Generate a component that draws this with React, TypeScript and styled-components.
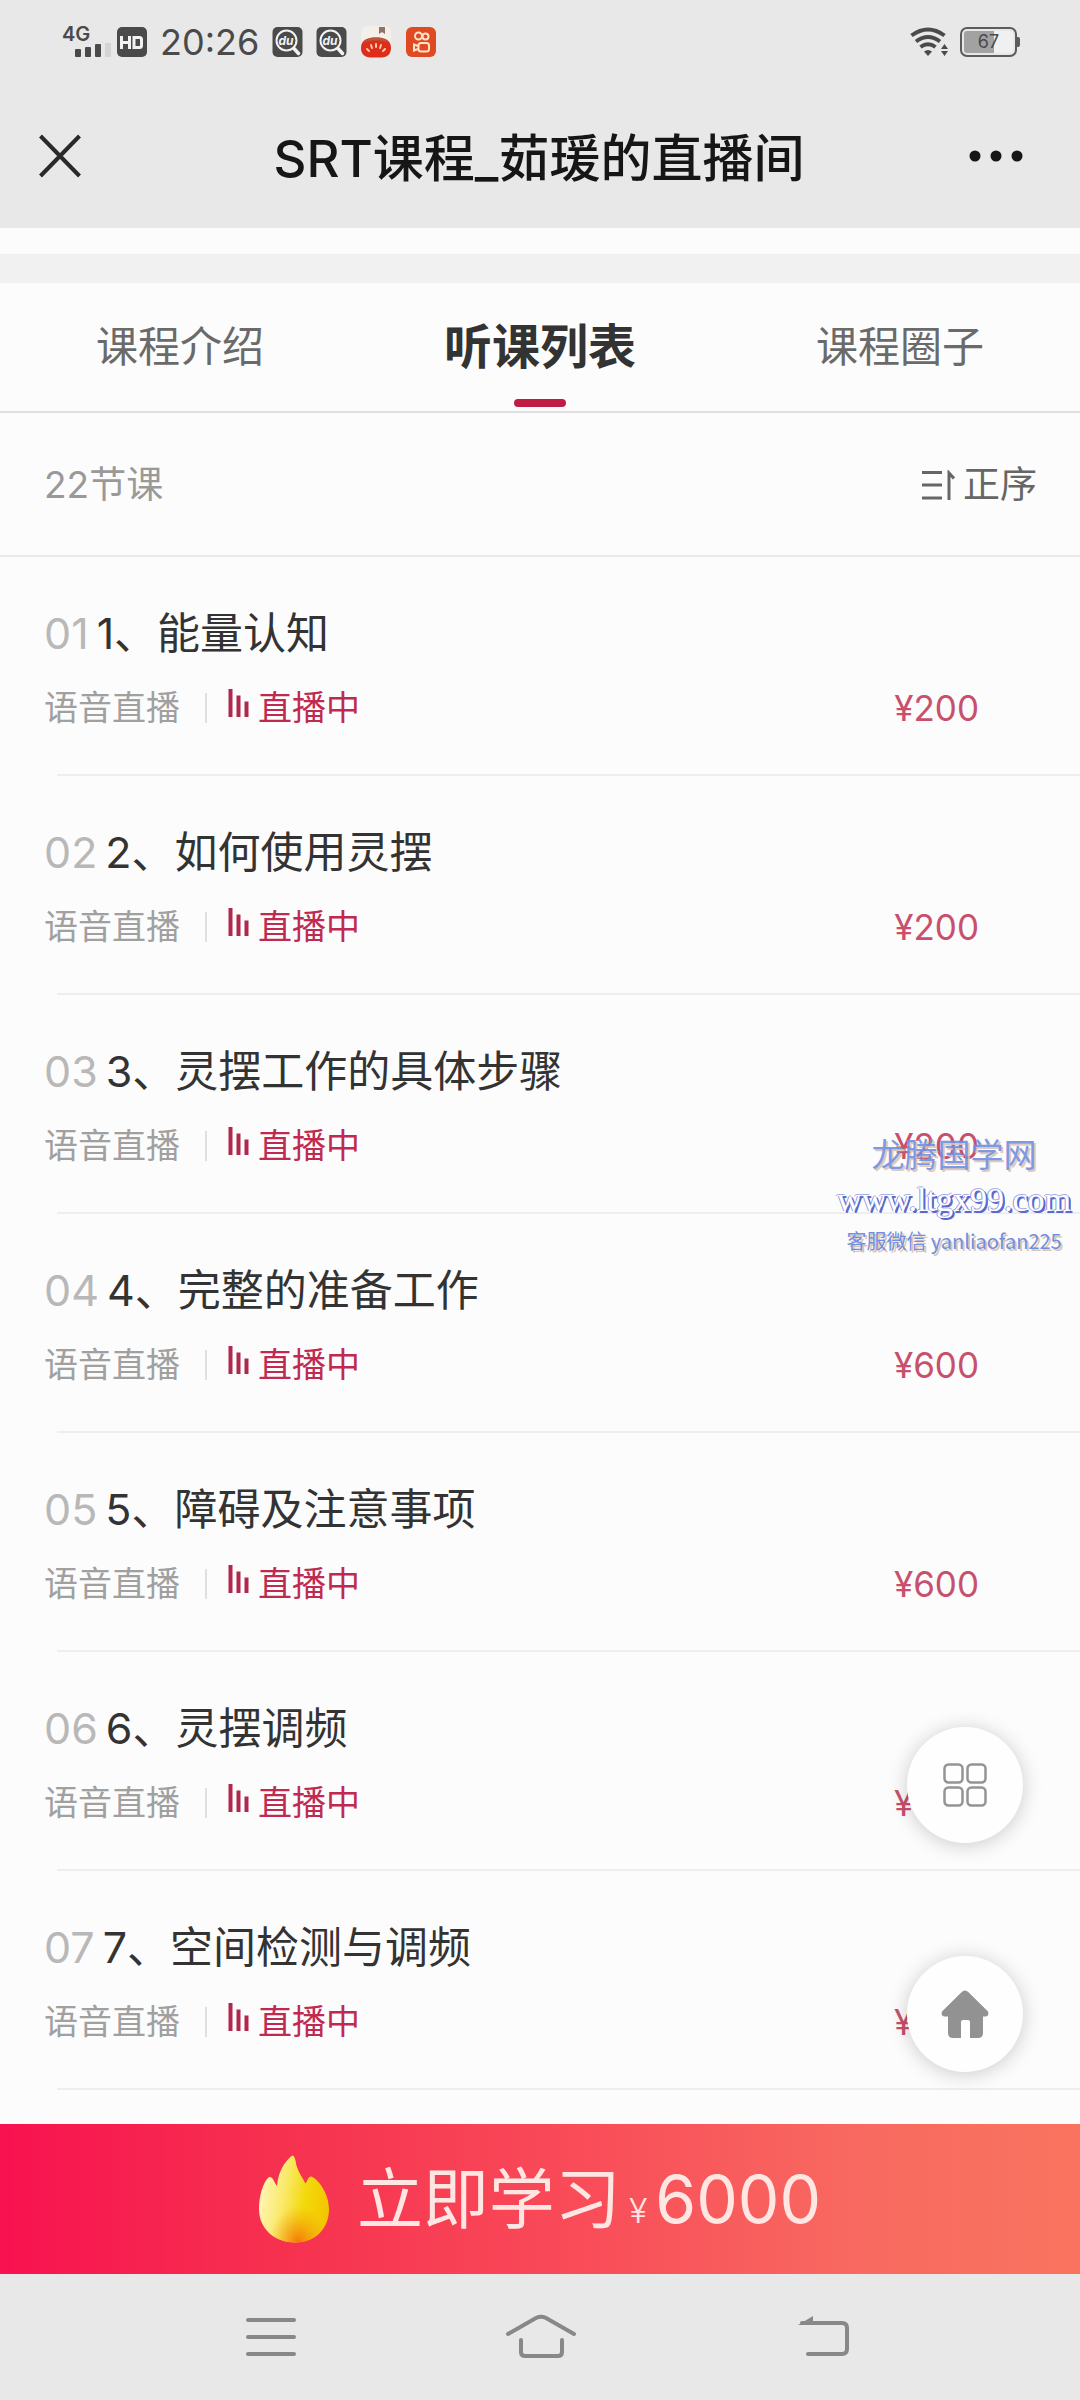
import React from 'react';
import styled, { createGlobalStyle } from 'styled-components';

const GlobalStyle = createGlobalStyle`
  * { box-sizing: border-box; }
  body {
    margin: 0;
    background: #fcfcfc;
    font-family: Inter, "Noto Sans CJK SC", sans-serif;
    color: #333;
  }
  button {
    padding: 0;
    border: 0;
    background: none;
    font: inherit;
    color: inherit;
    cursor: pointer;
  }
  svg { display: block; flex: none; }
`;

const Page = styled.div`
  position: relative;
  display: flex;
  flex-direction: column;
  min-height: 100vh;
`;

const StatusBar = styled.div`
  display: flex;
  align-items: center;
  justify-content: space-between;
  height: 84px;
  padding: 0 63px 0 62px;
  background: #e8e8e8;
  color: #4a4a4a;
`;

const StatusGroup = styled.div<{ $gap: number }>`
  display: flex;
  align-items: center;
  gap: ${(p) => p.$gap}px;
`;

const Signal = styled.div`
  display: flex;
  flex-direction: column;
  width: 50px;
  height: 34px;
  font-size: 20px;
  line-height: 18px;
  font-weight: 600;

  svg { align-self: flex-end; }
`;

const Clock = styled.time`
  font-size: 36px;
  line-height: 40px;
`;

const Battery = styled.div`
  position: relative;
  display: flex;
  align-items: center;
  justify-content: center;
  width: 57px;
  height: 30px;
  border: 2px solid #5c5c5c;
  border-radius: 7px;
  background: linear-gradient(90deg, #a2a2a2 62%, #f0f0f0 62%) content-box;
  padding: 2px;
  font-size: 18px;
  line-height: 22px;

  &::after {
    content: '';
    position: absolute;
    right: -5px;
    top: 8px;
    width: 3px;
    height: 10px;
    border-radius: 0 2px 2px 0;
    background: #5c5c5c;
  }
`;

const TitleBar = styled.header`
  display: grid;
  grid-template-columns: 74px 1fr 60px;
  align-items: center;
  height: 144px;
  padding: 0 54px 0 38px;
  background: #e8e8e8;
`;

const PageTitle = styled.h1`
  margin: 0;
  padding-top: 6px;
  text-align: center;
  font-size: 51px;
  line-height: 60px;
  font-weight: 500;
  color: #161616;
`;

const Band = styled.div`
  height: 55px;
  border-top: 26px solid #fcfcfc;
  background: #f1f1f1;
`;

const Tabs = styled.nav`
  display: grid;
  grid-template-columns: repeat(3, 1fr);
  height: 130px;
  border-bottom: 2px solid #dfdfdf;
`;

const Tab = styled.button<{ $active?: boolean }>`
  position: relative;
  font-size: ${(p) => (p.$active ? 48 : 42)}px;
  line-height: 60px;
  font-weight: ${(p) => (p.$active ? 700 : 400)};
  color: ${(p) => (p.$active ? '#333' : '#6a6a6a')};

  &::after {
    content: '';
    display: ${(p) => (p.$active ? 'block' : 'none')};
    position: absolute;
    left: calc(50% - 26px);
    bottom: 4px;
    width: 52px;
    height: 8px;
    border-radius: 4px;
    background: #bf1e44;
  }
`;

const ListHeader = styled.div`
  display: flex;
  align-items: center;
  justify-content: space-between;
  height: 144px;
  padding: 2px 43px 0 44px;
  border-bottom: 2px solid #e9e9e9;
  font-size: 37px;
  line-height: 60px;
  color: #999;
`;

const SortButton = styled.button`
  display: flex;
  align-items: center;
  gap: 8px;
  color: #666;
`;

const LessonList = styled.ul`
  flex: 1;
  margin: 0;
  padding: 0 0 33px;
  list-style: none;
`;

const Lesson = styled.li`
  display: flex;
  flex-direction: column;
  gap: 23px;
  padding-top: 46px;
`;

const LessonTitle = styled.h2`
  display: flex;
  gap: 8px;
  margin: 0;
  padding: 0 44px;
  font-size: 43px;
  line-height: 60px;
  font-weight: 400;
`;

const LessonNumber = styled.span`
  color: #b8b8b8;
`;

const LessonMeta = styled.div`
  display: flex;
  align-items: center;
  padding: 0 101px 0 44px;
  font-size: 34px;
  line-height: 44px;
  color: #a0a0a0;
`;

const Separator = styled.span`
  width: 2px;
  height: 30px;
  margin: 0 21px 0 25px;
  background: #e0e0e0;
`;

const Live = styled.span`
  display: flex;
  align-items: center;
  gap: 8px;
  color: #c02a50;
`;

const Price = styled.span`
  margin-left: auto;
  font-size: 35px;
  color: #c8506c;
`;

const Divider = styled.div`
  height: 2px;
  margin: 21px 0 0 57px;
  background: #eee;
`;

const BottomDock = styled.footer`
  position: sticky;
  bottom: 0;
`;

const BuyButton = styled.button`
  display: flex;
  align-items: center;
  justify-content: center;
  width: 100%;
  height: 150px;
  background: linear-gradient(90deg, #f8124f 0%, #f6304f 25%, #f94a58 52%, #f86860 78%, #f9745f 100%);
  color: #ffe6e2;
`;

const BuyText = styled.span`
  display: flex;
  align-items: baseline;
  gap: 8px;
  padding: 12px 0 0 28px;
  font-size: 66px;
  line-height: 90px;
`;

const Currency = styled.small`
  font-size: 34px;
  font-weight: 300;
`;

const SystemNav = styled.nav`
  display: grid;
  grid-template-columns: repeat(3, 1fr);
  align-items: center;
  justify-items: center;
  height: 126px;
  padding: 0 12.5%;
  background: #e8e8e8;
`;

const FloatingActions = styled.div`
  position: fixed;
  right: 57px;
  bottom: 328px;
  display: flex;
  flex-direction: column;
  gap: 113px;
`;

const RoundButton = styled.button`
  display: grid;
  place-items: center;
  width: 116px;
  height: 116px;
  border-radius: 50%;
  background: #fefefe;
  box-shadow: 0 2px 20px rgba(0, 0, 0, 0.2);
`;

const Watermark = styled.aside`
  position: absolute;
  top: 1132px;
  right: 9px;
  display: flex;
  flex-direction: column;
  align-items: center;
  color: #6f8fe2;
  text-shadow: 2px 2px 0 #dcc4b6;
  pointer-events: none;
`;

const WatermarkName = styled.span`
  font-size: 33px;
  line-height: 46px;
  opacity: 0.9;
`;

const WatermarkSite = styled.span`
  font-family: "Liberation Serif", serif;
  font-size: 34px;
  line-height: 44px;
  color: #fff;
  text-shadow: -1px 0 0 #8b97de, 0 -1px 0 #a5aee6, 2px 1px 0 #5a68d0, 2px 2px 0 #5a68d0;
`;

const WatermarkContact = styled.span`
  font-family: "Noto Sans CJK SC", sans-serif;
  font-size: 20px;
  line-height: 38px;
`;

const SearchBadge = () => (
  <svg width="31" height="30" viewBox="0 0 30 30" aria-hidden="true">
    <rect width="30" height="30" rx="5" fill="#4a4a4a" />
    <circle cx="14" cy="13.500" r="10" fill="none" stroke="#f2f2f2" strokeWidth="2" />
    <path d="M21.500 21.500l4.500 5" stroke="#f2f2f2" strokeWidth="3.500" strokeLinecap="round" />
    <text x="13.500" y="18" textAnchor="middle" fontFamily="Inter, sans-serif" fontSize="12" fontWeight="700" fontStyle="italic" fill="#f2f2f2">du</text>
  </svg>
);

const HdBadge = () => (
  <svg width="30" height="30" viewBox="0 0 30 30" aria-label="HD">
    <rect width="30" height="30" rx="5" fill="#4a4a4a" />
    <path d="M4.500 9v13M12.500 9v13M4.500 15.500h8M17 10.500h5.500q2 0 2 2v6q0 2-2 2H17z" fill="none" stroke="#f2f2f2" strokeWidth="3" />
  </svg>
);

const TomatoIcon = () => (
  <svg width="32" height="32" viewBox="0 0 32 32" aria-hidden="true">
    <rect x="1" y="0" width="30" height="24" rx="6" fill="#f5efea" />
    <path d="M19 1h6v7l-3-2-3 2z" fill="#8d7468" />
    <path d="M1 22C1 14 7 11.500 16 11.500S31 14 31 22c0 6-4 9.500-9 9.500H10C5 31.500 1 28 1 22z" fill="#dd2e1c" />
    <path d="M3 17c3-4 8-5.500 13-5.500S26 13 29 17c-4-2-8-2.500-13-2.500S7 15 3 17z" fill="#b5593c" />
    <path d="M16 18v3M11 19l1 3M21 19l-1 3M7 23l2 2M25 23l-2 2" stroke="#ffc9a0" strokeWidth="2" strokeLinecap="round" />
  </svg>
);

const VideoAppIcon = () => (
  <svg width="32" height="32" viewBox="0 0 32 32" aria-hidden="true">
    <rect x="1" y="1" width="30" height="30" rx="6" fill="#df4a22" />
    <g fill="none" stroke="#ffe2c8" strokeWidth="2">
      <circle cx="13.500" cy="10" r="3.500" />
      <circle cx="20.500" cy="10.500" r="3" />
      <rect x="13.500" y="17" width="10.500" height="8.500" rx="2.500" />
      <path d="M13 20l-4-1.500v6L13 23" />
    </g>
  </svg>
);

const SignalBars = () => (
  <svg width="37" height="14" viewBox="0 0 37 14" aria-hidden="true">
    <rect x="0" y="6" width="6" height="8" rx="1" fill="#4a4a4a" />
    <rect x="10" y="4" width="6" height="10" rx="1" fill="#4a4a4a" />
    <rect x="20" y="1" width="6" height="13" rx="1" fill="#4a4a4a" />
    <rect x="30" y="0" width="6" height="14" rx="1" fill="#d4d4d4" />
  </svg>
);

const WifiIcon = () => (
  <svg width="38" height="30" viewBox="0 0 38 30" aria-hidden="true">
    <g fill="none" stroke="#4a4a4a" strokeWidth="4">
      <path d="M1.500 8.500Q18 -3.500 34.500 8.500" />
      <path d="M6 14.500Q18 5.500 30 14.500" />
      <path d="M10.500 20Q18 14.500 25.500 20" />
    </g>
    <path d="M14 24.500q4-3 8 0L18 29z" fill="#4a4a4a" />
    <path d="M34.500 17l3.500 5h-7zM34.500 29l3.500-5h-7z" fill="#4a4a4a" />
  </svg>
);

const CloseIcon = () => (
  <svg width="44" height="44" viewBox="0 0 44 44" aria-hidden="true">
    <path d="M2.500 2l39 40M41.500 2l-39 40" stroke="#2a2a2a" strokeWidth="4" />
  </svg>
);

const MoreIcon = () => (
  <svg width="60" height="12" viewBox="0 0 60 12" aria-hidden="true">
    <circle cx="9" cy="6" r="5.500" fill="#161616" />
    <circle cx="30" cy="6" r="5.500" fill="#161616" />
    <circle cx="51" cy="6" r="5.500" fill="#161616" />
  </svg>
);

const SortIcon = () => (
  <svg width="34" height="30" viewBox="0 0 34 30" aria-hidden="true">
    <path d="M1 2.500h20M1 15h20M1 28h20M28 30V3l5 5.500" fill="none" stroke="#666" strokeWidth="3" />
  </svg>
);

const LiveIcon = () => (
  <svg width="22" height="38" viewBox="0 0 22 38" aria-hidden="true">
    <path d="M2.500 0v28M10.500 6.500V28M18.500 12.500V28" stroke="#b0284c" strokeWidth="4" />
  </svg>
);

const FlameIcon = () => (
  <svg width="70" height="88" viewBox="0 0 70 88" aria-hidden="true">
    <defs>
      <linearGradient id="flame" x1="0" y1="0.400" x2="1" y2="0.600">
        <stop offset="0" stopColor="#fff6b8" />
        <stop offset="0.350" stopColor="#fae96a" />
        <stop offset="0.650" stopColor="#f3d90c" />
        <stop offset="1" stopColor="#f3c400" />
      </linearGradient>
      <radialGradient id="ember" cx="0.560" cy="1" r="0.420">
        <stop offset="0" stopColor="#f5780a" />
        <stop offset="1" stopColor="#f5a00a" stopOpacity="0" />
      </radialGradient>
    </defs>
    {['url(#flame)', 'url(#ember)'].map((fill) => (
      <path
        key={fill}
        fill={fill}
        d="M33 0.500c3 0 3.500 5 4.500 10 2 7 6 12 9 18 2-2 2-7 6-7C60 25 70 39 70 54 70 75 55 87.500 36 87.500S0 75 0 54C0 41 4 27 10 22c4-.5 5 5 8 9C19 18 25 7 33 .5z"
      />
    ))}
  </svg>
);

const GridIcon = () => (
  <svg width="44" height="44" viewBox="0 0 44 44" aria-hidden="true">
    <g fill="none" stroke="#949494" strokeWidth="2.500">
      <rect x="1.500" y="1.500" width="18" height="18" rx="4" />
      <rect x="24.500" y="1.500" width="18" height="18" rx="4" />
      <rect x="1.500" y="24.500" width="18" height="18" rx="4" />
      <rect x="24.500" y="24.500" width="18" height="18" rx="4" />
    </g>
  </svg>
);

const HomeIcon = () => (
  <svg width="48" height="48" viewBox="0 0 48 48" aria-hidden="true">
    <path
      fill="#929292"
      d="M20.500 2.200q3.500-3.400 7 0L47 21.500q1.500 4-2 5H42V43q0 5-5 5h-8V32q0-2-2-2h-5q-2 0-2 2v16h-8q-5 0-5-5V26.500H3q-3.500-1-2-5z"
    />
  </svg>
);

const NavMenuIcon = () => (
  <svg width="84" height="48" viewBox="0 0 84 48" aria-hidden="true">
    <path d="M20 7h46M20 24h46M20 41h46" stroke="#888" strokeWidth="4" strokeLinecap="round" />
  </svg>
);

const NavHomeIcon = () => (
  <svg width="84" height="48" viewBox="0 0 84 48" aria-hidden="true">
    <g fill="none" stroke="#888" strokeWidth="4" strokeLinecap="round" strokeLinejoin="round">
      <path d="M10 21L38 5q5-2.500 10 0l28 16" />
      <path d="M23 27v12q0 4 4 4h33q4 0 4-4V27" />
    </g>
  </svg>
);

const NavBackIcon = () => (
  <svg width="84" height="48" viewBox="0 0 84 48" aria-hidden="true">
    <path d="M34 10h40q5 0 5 5v21q0 5-5 5H40" fill="none" stroke="#888" strokeWidth="4" strokeLinecap="round" />
    <path d="M30 12l15-9v9z" fill="#888" />
  </svg>
);

const lessons = [
  { no: '01', title: '1、能量认知', price: 200 },
  { no: '02', title: '2、如何使用灵摆', price: 200 },
  { no: '03', title: '3、灵摆工作的具体步骤', price: 200 },
  { no: '04', title: '4、完整的准备工作', price: 600 },
  { no: '05', title: '5、障碍及注意事项', price: 600 },
  { no: '06', title: '6、灵摆调频', price: 600 },
  { no: '07', title: '7、空间检测与调频', price: 600 },
];

export default function App() {
  return (
    <Page>
      <GlobalStyle />
      <StatusBar>
        <StatusGroup $gap={13}>
          <StatusGroup $gap={5}>
            <Signal>4G<SignalBars /></Signal>
            <HdBadge />
          </StatusGroup>
          <Clock>20:26</Clock>
          <SearchBadge />
          <SearchBadge />
          <TomatoIcon />
          <VideoAppIcon />
        </StatusGroup>
        <StatusGroup $gap={12}>
          <WifiIcon />
          <Battery>67</Battery>
        </StatusGroup>
      </StatusBar>
      <TitleBar>
        <button aria-label="关闭"><CloseIcon /></button>
        <PageTitle>SRT课程_茹瑗的直播间</PageTitle>
        <button aria-label="更多"><MoreIcon /></button>
      </TitleBar>
      <Band />
      <Tabs>
        <Tab>课程介绍</Tab>
        <Tab $active>听课列表</Tab>
        <Tab>课程圈子</Tab>
      </Tabs>
      <ListHeader>
        <span>22节课</span>
        <SortButton><SortIcon />正序</SortButton>
      </ListHeader>
      <LessonList>
        {lessons.map((lesson) => (
          <Lesson key={lesson.no}>
            <LessonTitle>
              <LessonNumber>{lesson.no}</LessonNumber>
              {lesson.title}
            </LessonTitle>
            <LessonMeta>
              语音直播
              <Separator />
              <Live><LiveIcon />直播中</Live>
              <Price>¥{lesson.price}</Price>
            </LessonMeta>
            <Divider />
          </Lesson>
        ))}
      </LessonList>
      <BottomDock>
        <BuyButton>
          <FlameIcon />
          <BuyText>
            立即学习
            <Currency>¥</Currency>
            <span>6000</span>
          </BuyText>
        </BuyButton>
        <SystemNav>
          <button aria-label="最近任务"><NavMenuIcon /></button>
          <button aria-label="主屏幕"><NavHomeIcon /></button>
          <button aria-label="返回"><NavBackIcon /></button>
        </SystemNav>
      </BottomDock>
      <FloatingActions>
        <RoundButton aria-label="全部功能"><GridIcon /></RoundButton>
        <RoundButton aria-label="首页"><HomeIcon /></RoundButton>
      </FloatingActions>
      <Watermark>
        <WatermarkName>龙腾国学网</WatermarkName>
        <WatermarkSite>www.ltgx99.com</WatermarkSite>
        <WatermarkContact>客服微信 yanliaofan225</WatermarkContact>
      </Watermark>
    </Page>
  );
}
